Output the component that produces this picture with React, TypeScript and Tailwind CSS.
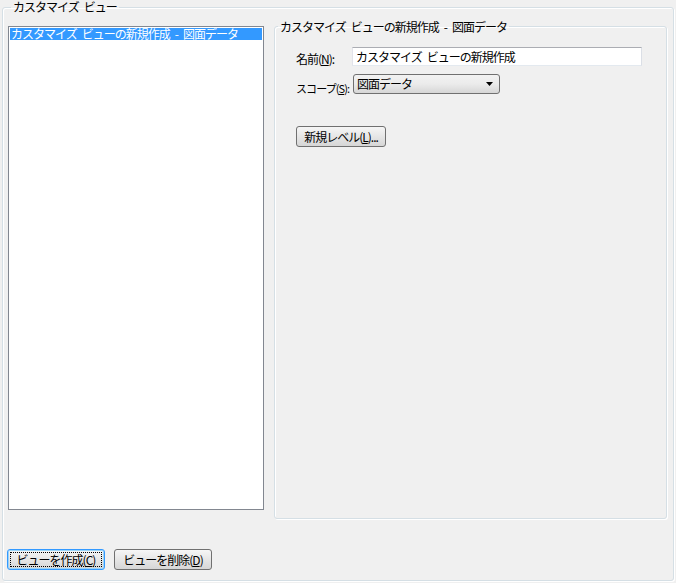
const FONT = "font-['MS_UI_Gothic','Noto_Sans_CJK_JP',sans-serif]"
const SP = '\u2002'

function WinButton({
  children,
  width,
  focused = false,
}: {
  children: React.ReactNode
  width: string
  focused?: boolean
}) {
  return (
    <button
      className={
        'flex h-[21px] items-center justify-center whitespace-nowrap rounded-[3px] border bg-gradient-to-b from-[#f6f6f6] via-[#e6e6e6] to-[#d6d6d6] p-[2px] text-[12px] leading-none text-black ' +
        width +
        (focused
          ? ' border-[#3399ff] shadow-[inset_0_0_0_1px_#9ad4f8]'
          : ' border-[#707070]')
      }
    >
      <span
        className={
          'flex h-full w-full items-center justify-center ' +
          (focused ? 'outline outline-1 outline-dotted outline-black -outline-offset-1' : '')
        }
      >
        {children}
      </span>
    </button>
  )
}

export default function App() {
  return (
    <div
      className={`h-[583px] w-[676px] overflow-hidden whitespace-nowrap bg-[#f0f0f0] text-[12px] tracking-[-1px] text-black ${FONT}`}
    >
      <fieldset className="mx-[2px] h-[581px] rounded-[3px] border border-[#d5dfe5] px-[5px] shadow-[inset_1px_1px_0_#fff,1px_1px_0_#fff]">
        <legend className="ml-[3px] px-[2px] leading-[14px]">カスタマイズ{SP}ビュー</legend>

        <div className="flex items-start">
          <div className="mt-[12px] h-[484px] w-[256px] border border-[#828790] bg-white p-[1px]">
            <div className="h-[12px] bg-[#3399ff] pl-[1px] leading-[12px] text-white">
              カスタマイズ{SP}ビューの新規作成{SP}-{SP}図面データ
            </div>
          </div>

          <fieldset className="mt-[6px] ml-[10px] h-[499px] w-[393px] rounded-[3px] border border-[#d5dfe5] p-0 shadow-[inset_1px_1px_0_#fff,1px_1px_0_#fff]">
            <legend className="ml-[3px] px-[2px] leading-[13px]">
              カスタマイズ{SP}ビューの新規作成{SP}-{SP}図面データ
            </legend>

            <div className="mt-[14px] flex h-[19px] items-end pl-[21px]">
              <span className="w-[56px] leading-[14px]">
                名前(<u>N</u>):
              </span>
              <div className="flex h-[19px] w-[290px] items-center border border-[#abadb3] border-l-[#e2e3ea] border-r-[#dbdfe6] border-b-[#e3e9ef] bg-white pl-[3px]">
                カスタマイズ{SP}ビューの新規作成
              </div>
            </div>

            <div className="mt-[8px] flex h-[20px] items-end pl-[21px]">
              <span className="w-[57px] text-[11px] leading-[14px] -mb-[1px] tracking-[-0.9px]">
                スコープ(<u>S</u>):
              </span>
              <div className="flex h-[20px] w-[147px] items-center justify-between rounded-[3px] border border-[#707070] bg-gradient-to-b from-[#f2f2f2] via-[#ebebeb] to-[#d6d6d6] pl-[3px] pr-[6px]">
                <span>図面データ</span>
                <svg width="7" height="4" viewBox="0 0 7 4">
                  <path d="M0 0h7L3.5 4z" fill="#000" />
                </svg>
              </div>
            </div>

            <div className="mt-[32px] pl-[21px]">
              <WinButton width="w-[90px]">
                新規レベル(<u>L</u>)...
              </WinButton>
            </div>
          </fieldset>
        </div>

        <div className="mt-[30px] -ml-[1px] flex gap-[9px]">
          <WinButton width="w-[98px]" focused>
            ビューを作成(<u>C</u>)
          </WinButton>
          <WinButton width="w-[98px]">
            ビューを削除(<u>D</u>)
          </WinButton>
        </div>
      </fieldset>
    </div>
  )
}
